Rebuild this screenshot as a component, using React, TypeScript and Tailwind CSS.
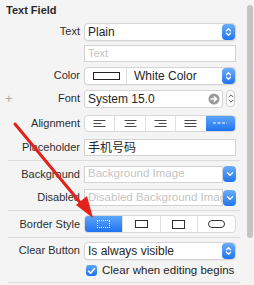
import React from 'react';

const font = { fontFamily: '"Liberation Sans", "Noto Sans CJK SC", sans-serif' };

function Stepper() {
    return (
        <div className="w-[13px] h-[16px] rounded-[4px] bg-gradient-to-b from-[#6aaefb] to-[#1f73ee] flex items-center justify-center">
            <svg width="7" height="10" viewBox="0 0 7 10" fill="none" stroke="white" strokeWidth="1.3" strokeLinecap="round" strokeLinejoin="round">
                <path d="M1.5 3.8 L3.5 1.8 L5.5 3.8" />
                <path d="M1.5 6.2 L3.5 8.2 L5.5 6.2" />
            </svg>
        </div>
    );
}

function DropButton() {
    return (
        <div className="w-[13px] h-[16px] rounded-[4px] bg-gradient-to-b from-[#6aaefb] to-[#1f73ee] flex items-center justify-center">
            <svg width="8" height="6" viewBox="0 0 8 6" fill="none" stroke="white" strokeWidth="1.4" strokeLinecap="round" strokeLinejoin="round">
                <path d="M1.5 1.8 L4 4.3 L6.5 1.8" />
            </svg>
        </div>
    );
}

function Row({ label, h, children, plus }: { label: string; h: string; children: React.ReactNode; plus?: boolean }) {
    return (
        <div className={`flex items-center ${h}`}>
            <div className="w-[80px] flex items-center justify-between pl-[5px] text-[11px] text-[#2e2e2e]">
                <span className="text-[#a8a8a8] text-[13px] leading-none">{plus ? '+' : ''}</span>
                <span>{label}</span>
            </div>
            <div className="ml-[4px] w-[152px]">{children}</div>
        </div>
    );
}

function Popup({ value, children }: { value?: string; children?: React.ReactNode }) {
    return (
        <div className="h-[18px] bg-white border border-[#d4d4d4] rounded-[4px] flex items-center pl-[3px] pr-[0px] shadow-[0_0.5px_0.5px_rgba(0,0,0,0.08)]">
            <div className="flex-1 flex items-center text-[12px] text-[#262626] overflow-hidden whitespace-nowrap">
                {children ?? value}
            </div>
            <Stepper />
        </div>
    );
}

function Field({ value, placeholder }: { value?: string; placeholder?: string }) {
    return (
        <div className="h-[17px] bg-white border border-[#d3d3d3] flex items-center px-[3px] text-[12px] whitespace-nowrap overflow-hidden">
            {value ? <span className="text-[#262626]">{value}</span> : <span className="text-[#c4c4c4] text-[11px]">{placeholder}</span>}
        </div>
    );
}

function Combo({ placeholder }: { placeholder: string }) {
    return (
        <div className="h-[17px] flex items-center">
            <div className="flex-1 h-[17px] bg-white border border-[#d3d3d3] flex items-center px-[3px] text-[11.5px] text-[#c4c4c4] whitespace-nowrap overflow-hidden">
                {placeholder}
            </div>
            <DropButton />
        </div>
    );
}

function Lines({ kind }: { kind: 'left' | 'center' | 'right' | 'justify' }) {
    const rows =
        kind === 'left'
            ? [[0, 12], [0, 8], [0, 12]]
            : kind === 'center'
                ? [[0, 12], [2, 10], [0, 12]]
                : kind === 'right'
                    ? [[0, 12], [4, 12], [0, 12]]
                    : [[0, 12], [0, 12], [0, 12]];
    return (
        <svg width="13" height="7" viewBox="0 0 13 7" stroke="#4a4a4a" strokeWidth="1">
            {rows.map((r, i) => (
                <line key={i} x1={r[0] + 0.5} x2={r[1] + 0.5} y1={i * 3 + 0.5} y2={i * 3 + 0.5} />
            ))}
        </svg>
    );
}

function Separator() {
    return <div className="ml-[8px] w-[232px] h-px bg-[#dcdcdc]" />;
}

export default function App() {
    const seg = 'flex-1 h-full flex items-center justify-center border-l border-[#e2e2e2]';
    return (
        <div className="relative w-[254px] h-[285px] bg-[#f4f4f4] overflow-hidden" style={font}>
            <div className="h-[21px] flex items-center pl-[6px] text-[11px] font-bold text-[#2a2a2a]">Text Field</div>

            <Row label="Text" h="h-[21px]">
                <Popup value="Plain" />
            </Row>
            <Row label="" h="h-[23px]">
                <Field placeholder="Text" />
            </Row>
            <Row label="Color" h="h-[21px]">
                <Popup>
                    <div className="w-[27px] h-[8px] border border-[#222] bg-white ml-[5px]" />
                    <div className="w-px h-[17px] bg-[#dedede] ml-[6px]" />
                    <span className="ml-[7px]">White Color</span>
                </Popup>
            </Row>
            <Row label="Font" h="h-[25px]" plus>
                <div className="flex items-center">
                    <div className="w-[139px] h-[18px] bg-white border border-[#d4d4d4] rounded-[3px] flex items-center pl-[3px] pr-[2px] text-[12px] text-[#262626]">
                        <span className="flex-1">System 15.0</span>
                        <svg width="12" height="12" viewBox="0 0 12 12">
                            <circle cx="6" cy="6" r="5.5" fill="#9a9a9a" />
                            <path d="M3 6 H8.5 M6.3 3.7 L8.6 6 L6.3 8.3" stroke="white" strokeWidth="1.4" fill="none" strokeLinecap="round" strokeLinejoin="round" />
                        </svg>
                    </div>
                    <div className="ml-[3px] w-[9px] h-[17px] rounded-[4px] border border-[#cfcfcf] bg-white flex items-center justify-center">
                        <svg width="6" height="11" viewBox="0 0 6 11" fill="none" stroke="#555" strokeWidth="1" strokeLinecap="round" strokeLinejoin="round">
                            <path d="M1 3.8 L3 1.8 L5 3.8" />
                            <path d="M1 7.2 L3 9.2 L5 7.2" />
                        </svg>
                    </div>
                </div>
            </Row>
            <Row label="Alignment" h="h-[24px]">
                <div className="h-[17px] bg-white border border-[#d8d8d8] rounded-[4px] flex overflow-hidden">
                    <div className="flex-1 h-full flex items-center justify-center"><Lines kind="left" /></div>
                    <div className={seg}><Lines kind="center" /></div>
                    <div className={seg}><Lines kind="right" /></div>
                    <div className={seg}><Lines kind="justify" /></div>
                    <div className="flex-1 h-full flex items-center justify-center bg-gradient-to-b from-[#5ea6fa] to-[#1e72ee]">
                        <svg width="14" height="2" viewBox="0 0 14 2" stroke="white" strokeWidth="1">
                            <line x1="0" x2="14" y1="1" y2="1" strokeDasharray="3 1.5" />
                        </svg>
                    </div>
                </div>
            </Row>
            <Row label="Placeholder" h="h-[25px]">
                <Field value="手机号码" />
            </Row>
            <Separator />
            <Row label="Background" h="h-[26px]">
                <Combo placeholder="Background Image" />
            </Row>
            <Row label="Disabled" h="h-[21px]">
                <Combo placeholder="Disabled Background Image" />
            </Row>
            <div className="h-[2px]" />
            <Separator />
            <Row label="Border Style" h="h-[26px]">
                <div className="h-[18px] bg-white border border-[#d8d8d8] rounded-[4px] flex overflow-hidden">
                    <div className="flex-1 h-full flex items-center justify-center bg-gradient-to-b from-[#5ea6fa] to-[#1e72ee]">
                        <div className="w-[13px] h-[8px] border border-dotted border-white" />
                    </div>
                    <div className={seg}><div className="w-[13px] h-[8px] border border-[#333]" /></div>
                    <div className={seg}><div className="w-[13px] h-[9px] border border-[#333] border-b-[1.5px] border-r-[1.5px]" /></div>
                    <div className={seg}><div className="w-[17px] h-[8px] border border-[#333] rounded-full" /></div>
                </div>
            </Row>
            <Separator />
            <Row label="Clear Button" h="h-[25px]">
                <Popup value="Is always visible" />
            </Row>
            <div className="h-[15px] flex items-center pl-[86px]">
                <div className="w-[11px] h-[11px] rounded-[3px] bg-gradient-to-b from-[#5ea6fa] to-[#1e72ee] flex items-center justify-center">
                    <svg width="9" height="8" viewBox="0 0 9 8" fill="none" stroke="white" strokeWidth="1.6" strokeLinecap="round" strokeLinejoin="round">
                        <path d="M1.5 4.2 L3.6 6.2 L7.5 1.5" />
                    </svg>
                </div>
                <span className="ml-[5px] text-[11.5px] text-[#262626]">Clear when editing begins</span>
            </div>
            <div className="h-[4px]" />
            <Separator />

            <div className="absolute right-[1px] top-[5px] w-[6px] h-[233px] rounded-full bg-[#c4c4c4]" />

            <svg className="absolute left-0 top-0 pointer-events-none" width="254" height="285" viewBox="0 0 254 285">
                <line x1="15" y1="124" x2="83" y2="206" stroke="#e5211b" strokeWidth="3" strokeLinecap="round" />
                <polygon points="93,218 76,205 87,196" fill="#e5211b" />
            </svg>
        </div>
    );
}
